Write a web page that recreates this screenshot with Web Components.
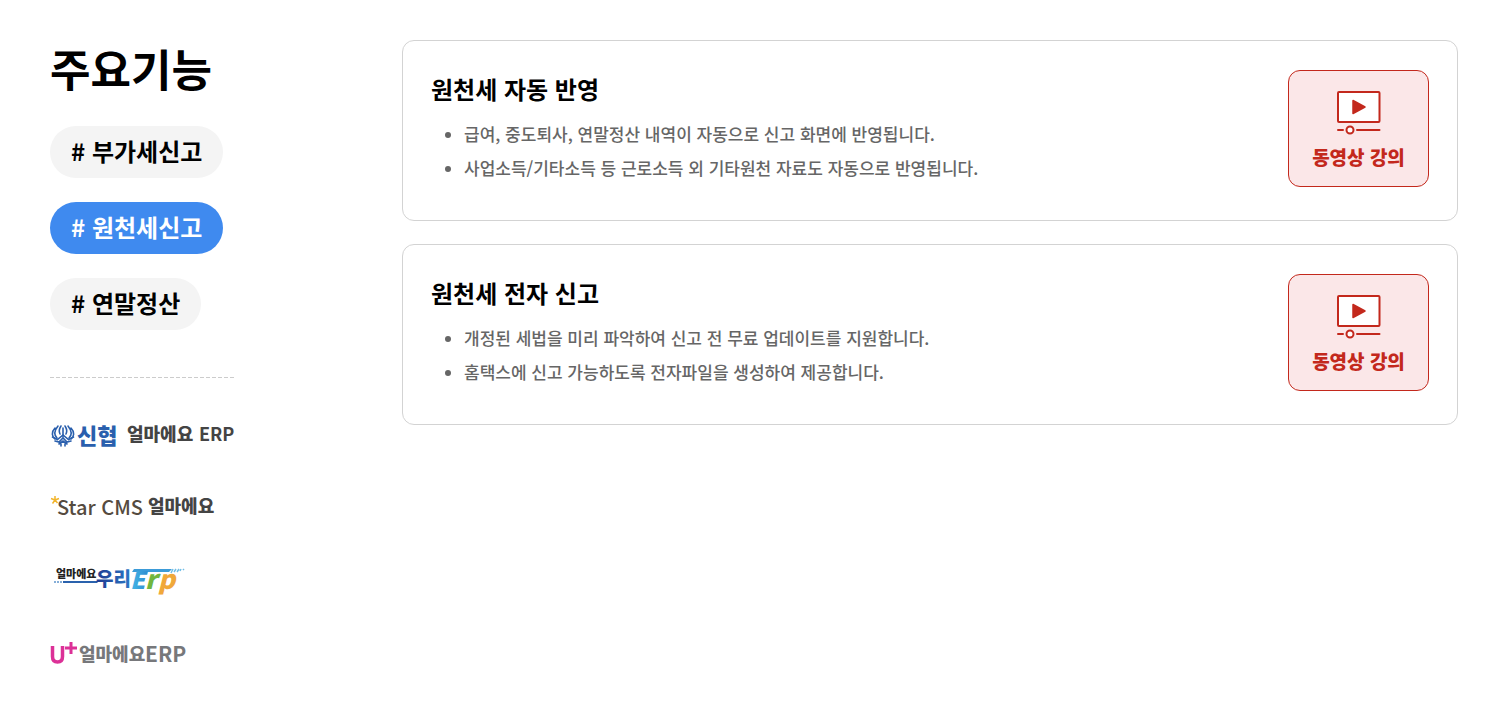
<!DOCTYPE html>
<html lang="ko">
<head>
<meta charset="utf-8">
<meta name="viewport" content="width=device-width, initial-scale=1">
<title>주요기능</title>
<style>
  body { margin: 0; background: #fff; color: #000; font-family: "Noto Sans CJK KR", "Noto Sans", sans-serif; }
</style>
</head>
<body>
<feature-page>
  <h1 slot="heading">주요기능</h1>
  <feature-tag slot="tags">부가세신고</feature-tag>
  <feature-tag slot="tags" active>원천세신고</feature-tag>
  <feature-tag slot="tags">연말정산</feature-tag>
  <partner-logos slot="partners"></partner-logos>
  <feature-card heading="원천세 자동 반영">
    <feature-point>급여, 중도퇴사, 연말정산 내역이 자동으로 신고 화면에 반영됩니다.</feature-point>
    <feature-point>사업소득/기타소득 등 근로소득 외 기타원천 자료도 자동으로 반영됩니다.</feature-point>
    <video-button slot="action">동영상 강의</video-button>
  </feature-card>
  <feature-card heading="원천세 전자 신고">
    <feature-point>개정된 세법을 미리 파악하여 신고 전 무료 업데이트를 지원합니다.</feature-point>
    <feature-point>홈택스에 신고 가능하도록 전자파일을 생성하여 제공합니다.</feature-point>
    <video-button slot="action">동영상 강의</video-button>
  </feature-card>
</feature-page>

<script>
function define(name, html, setup) {
  const template = document.createElement('template');
  template.innerHTML = html;
  customElements.define(name, class extends HTMLElement {
    constructor() {
      super();
      this.attachShadow({ mode: 'open' }).append(template.content.cloneNode(true));
    }
    connectedCallback() { if (setup) setup(this, this.shadowRoot); }
  });
}

define('feature-page', `
  <style>
    :host { display: grid; grid-template-columns: 312px minmax(0, 1fr); column-gap: 40px; padding: 40px 40px 40px 50px; }
    aside { display: flex; flex-direction: column; align-items: flex-start; }
    ::slotted(h1) { margin: 0 0 30px; font-size: 44px; line-height: 56px; font-weight: 700; }
    nav { display: flex; flex-direction: column; align-items: flex-start; gap: 24px; }
    hr { width: 186px; margin: 47px 0 42px; border: 0; height: 1px;
      background: repeating-linear-gradient(90deg, #ccc 0 4px, transparent 4px 6px); }
    main { display: flex; flex-direction: column; gap: 23px; }
  </style>
  <aside>
    <slot name="heading"></slot>
    <nav aria-label="주요기능"><slot name="tags"></slot></nav>
    <hr>
    <slot name="partners"></slot>
  </aside>
  <main><slot></slot></main>`);

define('feature-tag', `
  <style>
    :host { display: block; }
    button { display: block; height: 52px; padding: 0 21px 2px; border: 0; border-radius: 26px; background: #f4f4f4;
      color: #000; font: 700 24px/50px "Noto Sans CJK KR", "Noto Sans", sans-serif; white-space: nowrap; cursor: pointer; }
    :host([active]) button { background: #3f8aef; color: #fff; }
  </style>
  <button type="button"># <slot></slot></button>`);

define('feature-card', `
  <style>
    :host { display: flex; justify-content: space-between; align-items: flex-start; gap: 24px;
      box-sizing: border-box; min-height: 181px; padding: 29px 28px; border: 1px solid #d3d3d3; border-radius: 12px; }
    h2 { margin: 0 0 9px; font-size: 24px; line-height: 38px; font-weight: 700; }
    .list { padding-left: 33px; color: #666; }
  </style>
  <div class="text">
    <h2></h2>
    <div class="list" role="list"><slot></slot></div>
  </div>
  <slot name="action"></slot>`,
  (host, root) => { root.querySelector('h2').textContent = host.getAttribute('heading'); });

define('feature-point', `
  <style>
    :host { display: list-item; list-style: disc; font-size: 17px; line-height: 34px; font-weight: 500; }
    :host::marker { font-size: 16px; }
  </style>
  <slot></slot>`,
  host => host.setAttribute('role', 'listitem'));

define('video-button', `
  <style>
    :host { display: block; flex: none; }
    button { display: flex; flex-direction: column; align-items: center; gap: 7px; box-sizing: border-box;
      min-width: 141px; padding: 20px 22px 14px; border: 1px solid #c3281c; border-radius: 12px; background: #fbe7e8;
      color: #c3281c; font: 900 19px/30px "Noto Sans CJK KR", "Noto Sans", sans-serif; white-space: nowrap; cursor: pointer; }
    svg { display: block; }
  </style>
  <button type="button">
    <svg width="44" height="44" viewBox="0 0 44 44" fill="none" stroke="#c3281c" stroke-width="2" aria-hidden="true">
      <rect x="1" y="1" width="41.500" height="30" rx="1" fill="#fff"/>
      <path d="M16 9.500v13l12-6.500z" fill="#c3281c" stroke-width="1.500" stroke-linejoin="round"/>
      <path d="M1 39H6M20 39h22.500" stroke-linecap="round"/>
      <circle cx="13" cy="39" r="3.500" fill="#fff"/>
    </svg>
    <span><slot></slot></span>
  </button>`);

define('partner-logos', `
  <style>
    :host { display: flex; flex-direction: column; align-items: flex-start; gap: 42px; }
    a { display: block; text-decoration: none; }
    svg { display: block; overflow: visible; font-family: "Noto Sans CJK KR", "Noto Sans", sans-serif; }
  </style>
  <a href="#cu" aria-label="신협 얼마에요 ERP">
    <svg width="186" height="30" viewBox="0 0 186 30">
      <g fill="none" stroke="#2a5fad" stroke-width="1.600" stroke-linecap="round">
        <path d="M5 8c-4 4-3 9 0 11M8 6c-4 5-4 9-1 12M21 8c4 4 3 9 0 11M18 6c4 5 4 9 1 12M11 6c-2 3-2 6-1 8M15 6c2 3 2 6 1 8M13 8v9"/>
        <path d="M2.500 17l5 2.500L13 15l5.500 4.500 5-2.500M5 21l4 1 4-4 4 4 4-1M9 24l4-3 4 3M11 26v-2M15 26v-2"/>
      </g>
      <text x="27" y="24" font-size="22" font-weight="900" fill="#2a5fad">신협</text>
      <text x="77" y="21" font-size="18" font-weight="900" fill="#444">얼마에요</text>
      <text x="149" y="21" font-size="18" font-weight="700" fill="#444">ERP</text>
    </svg>
  </a>
  <a href="#star" aria-label="Star CMS 얼마에요">
    <svg width="186" height="30" viewBox="0 0 186 30">
      <path d="M5 8V4M5 8L1 6.500M5 8l4-1.500M5 8l-2.500 3.500M5 8l2.500 3" fill="none" stroke="#f2b52c" stroke-width="1.500"/>
      <text x="7" y="23" font-size="20" font-weight="500" fill="#554b3f">Star CMS</text>
      <text x="98" y="21" font-size="18" font-weight="900" fill="#444">얼마에요</text>
    </svg>
  </a>
  <a href="#woori" aria-label="얼마에요 우리Erp">
    <svg width="186" height="32" viewBox="0 0 186 32">
      <defs>
        <linearGradient id="blue"><stop stop-color="#203a91"/><stop offset="1" stop-color="#2b77c5"/></linearGradient>
        <linearGradient id="sky"><stop stop-color="#46b9e9"/><stop offset="1" stop-color="#2f8ccf"/></linearGradient>
      </defs>
      <path d="M13 17h36l-2 2H13z" fill="#2a62ad"/>
      <path d="M4 18h2M7 18h2M10 18h2" stroke="#5d94cc" stroke-width="1.500"/>
      <path d="M84 5h38l-3 3H82z" fill="#3b9bd8"/>
      <path d="M121 9l2-4M124 8l2-3M127 8l2-3M130 7l1-2M133 6l1-1" stroke="#70bde6" stroke-width="1.500"/>
      <text x="6" y="14" font-size="11" font-weight="900" fill="#222">얼마에요</text>
      <text x="46" y="22" font-size="19" font-weight="900" fill="url(#blue)">우리</text>
      <g font-size="26" font-weight="900" font-style="italic">
        <text x="80" y="25" font-size="24" fill="url(#sky)">E</text>
        <text x="95" y="25" fill="#70b63f">r</text>
        <text x="108" y="25" fill="#f0a83a">p</text>
      </g>
    </svg>
  </a>
  <a href="#uplus" aria-label="U+ 얼마에요 ERP">
    <svg width="186" height="32" viewBox="0 0 186 32">
      <path d="M2.500 8v10.500q0 5.500 5 5.500t5-5.500V8" fill="none" stroke="#dc3197" stroke-width="3.500"/>
      <path d="M21 4v12M15 10h12" stroke="#dc3197" stroke-width="3"/>
      <text x="29" y="23" font-size="18" font-weight="900" fill="#77787b">얼마에요</text>
      <text x="95" y="24" font-size="21" font-weight="700" fill="#77787b">ERP</text>
    </svg>
  </a>`);
</script>
</body>
</html>
